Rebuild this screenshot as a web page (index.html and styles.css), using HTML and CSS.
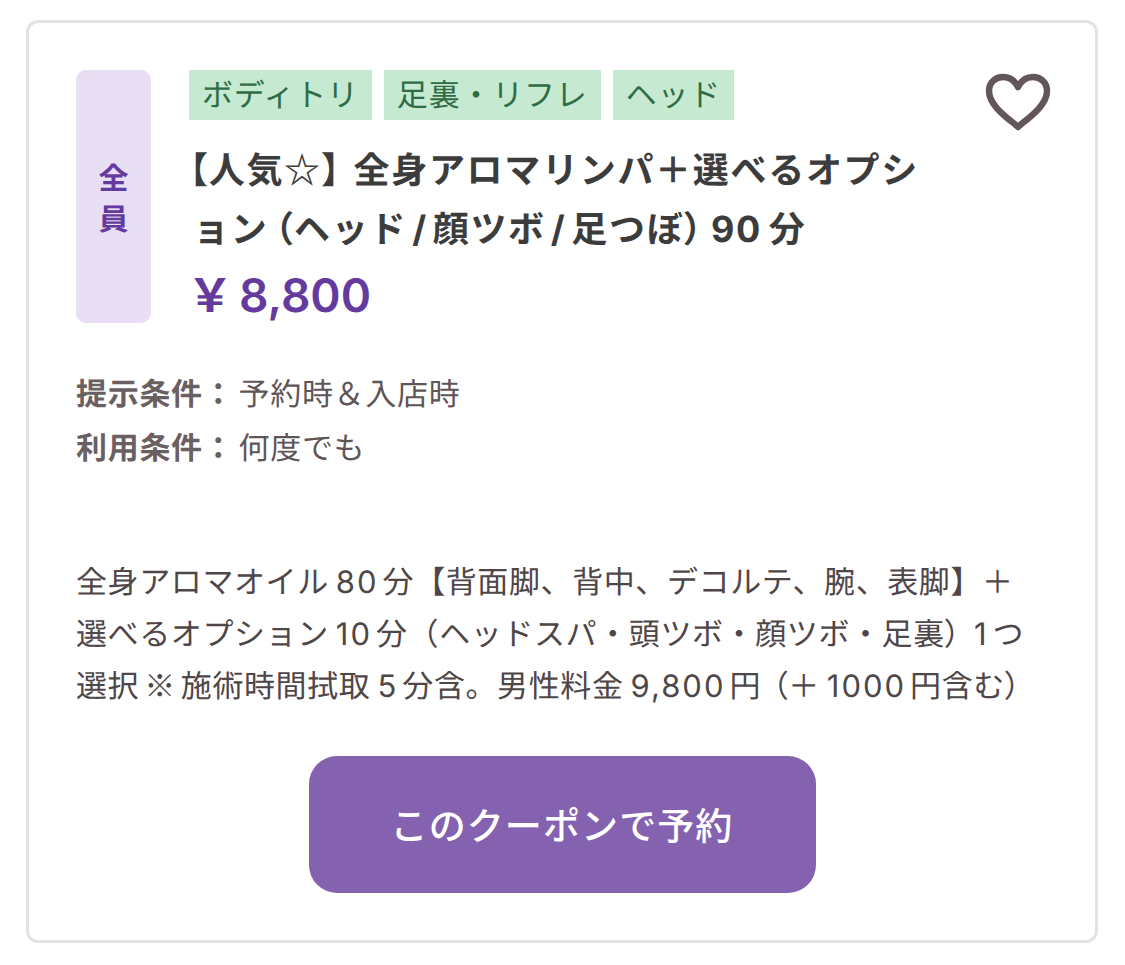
FILE: index.html
```html
<!DOCTYPE html>
<html lang="ja">
<head>
    <meta charset="UTF-8">
    <title>クーポン</title>
    <link rel="stylesheet" href="styles.css">
</head>
<body>
	<div class="card">
		<div class="top">
			<div class="target"><span>全</span><span>員</span></div>
			<div class="info">
				<div class="tags">
					<span class="tag">ボディトリ</span>
					<span class="tag">足裏・リフレ</span>
					<span class="tag">ヘッド</span>
				</div>
				<h2 class="title">
					<span class="title-line first"><span class="tight">【</span>人気☆<span class="tight bracket-close">】</span>全身アロマリンパ＋選べるオプシ</span>
					<span class="title-line">ョン<span class="tight paren-open">（</span>ヘッド<span class="num slash">/</span>顔ツボ<span class="num slash">/</span>足つぼ<span class="tight">）</span><span class="num">90</span>分</span>
				</h2>
				<p class="price">￥<span class="num">8,800</span></p>
			</div>
			<svg class="heart" viewBox="0 0 66 60" width="66" height="60">
				<path d="M33 54 C27 48 4 34 4 18 C4 9 11 4 18 4 C25 4 30 8 33 14 C36 8 41 4 48 4 C55 4 62 9 62 18 C62 34 39 48 33 54 Z" fill="none" stroke="#635658" stroke-width="6.5" stroke-linejoin="round"/>
			</svg>
		</div>

		<div class="terms">
			<p><b>提示条件：</b>予約時＆入店時</p>
			<p><b>利用条件：</b>何度でも</p>
		</div>

		<p class="desc">全身アロマオイル<span class="num">80</span>分【背面脚、背中、デコルテ、腕、表脚】＋<br>選べるオプション<span class="num">10</span>分（ヘッドスパ・頭ツボ・顔ツボ・足裏<span class="tight paren-close">）</span><span class="num">1</span>つ<br>選択<span class="mark">※</span>施術時間拭取<span class="num">5</span>分含。男性料金<span class="num">9,800</span>円<span class="tight paren-open">（</span>＋<span class="num">1000</span>円含む<span class="tight">）</span></p>

		<button class="reserve">このクーポンで予約</button>
	</div>
</body>
</html>
```

FILE: styles.css
```css
body {
	margin: 0;
	background-color: #fff;
	font-family: "Noto Sans CJK JP", sans-serif;
	text-rendering: geometricPrecision;
}

p, h2 {
	margin: 0;
}

.tight {
	font-feature-settings: "palt";
}

.num {
	margin: 0 4px 0 7px;
	font-family: Inter, sans-serif;
	letter-spacing: 2px;
	line-height: 1;
}

.mark {
	margin: 0 5px;
}

.card {
	box-sizing: border-box;
	width: 1072px;
	height: 923px;
	margin: 20px 0 0 26px;
	padding: 47px 47px 0 47px;
	border: 3px solid #e3e3e3;
	border-radius: 12px;
}

.top {
	display: flex;
	align-items: flex-start;
}

.target {
	display: flex;
	flex-direction: column;
	align-items: center;
	justify-content: center;
	width: 75px;
	height: 253px;
	flex-shrink: 0;
	border-radius: 10px;
	background-color: #e8dff4;
	color: #643a9e;
	font-size: 30px;
	font-weight: 700;
	line-height: 41px;
}

.info {
	flex: 1;
	min-width: 0;
	margin-left: 38px;
}

.tags {
	display: flex;
	gap: 12px;
}

.tag {
	height: 50px;
	padding: 0 13px;
	background-color: #c6e9d1;
	color: #2f6b45;
	font-size: 31px;
	letter-spacing: 0.8px;
	line-height: 46px;
}

.title {
	margin-top: 19px;
	color: #3c3c3c;
	font-size: 36px;
	font-weight: 700;
	letter-spacing: 1.7px;
	line-height: 59px;
}

.title-line {
	display: block;
	margin-left: 4px;
	white-space: nowrap;
}

.title-line.first {
	margin-left: 0;
}

.bracket-close {
	margin-right: 12px;
}

.paren-open {
	margin-left: 6px;
}

.paren-close {
	margin-right: 6px;
}

.title .num {
	margin: 0 7px;
	letter-spacing: 1.5px;
}

.title .slash {
	margin: 0 5px;
}

.price {
	margin: 5px 0 0 -2px;
	color: #643a9e;
	font-size: 46px;
	font-weight: 600;
	line-height: 62px;
}

.price .num {
	margin: 0 0 0 6px;
	letter-spacing: 0;
}

.heart {
	flex-shrink: 0;
	margin: 3px -3px 0 0;
}

.terms {
	margin-top: 41px;
	color: #5f5557;
	font-size: 31px;
	letter-spacing: 0.7px;
	line-height: 54px;
}

.terms b {
	margin-right: 4px;
	color: #6a5f61;
	font-weight: 700;
}

.desc {
	margin-top: 81px;
	color: #4f4648;
	font-size: 31px;
	letter-spacing: 0.6px;
	line-height: 52px;
	white-space: nowrap;
}

.desc .paren-open {
	margin-left: 11px;
}

.reserve {
	display: block;
	width: 507px;
	height: 137px;
	margin: 46px auto 0 auto;
	padding-bottom: 3px;
	border: none;
	border-radius: 28px;
	background-color: #8562b0;
	color: #fff;
	font-family: inherit;
	font-size: 37px;
	font-weight: 500;
	letter-spacing: 1.1px;
}
```
